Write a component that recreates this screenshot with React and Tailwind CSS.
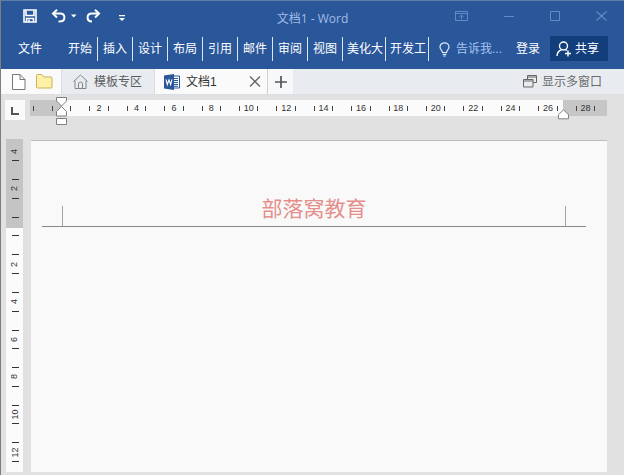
import React from "react";

const tabs = ["开始", "插入", "设计", "布局", "引用", "邮件", "审阅", "视图"];
const wideTabs = ["美化大", "开发工"];
const horizontalMarks = ["", 2, 4, 6, 8, 10, 12, 14, 16, 18, 20, 22, 24, 26, 28];
const verticalMarks = [2, "", 2, 4, 6, 8, 10, 12];

function TitleBar() {
  return (
    <header className="relative flex h-[30px] items-center text-white">
      <div className="flex items-center pl-[22px]">
        <button aria-label="保存" className="mr-[14px]">
          <svg width="14" height="14" viewBox="0 0 14 14" fill="none" stroke="currentColor" strokeWidth="1.6">
            <path d="M1 1h12v12H1z" />
            <path d="M3 1.500v5h8v-5" />
            <path d="M3.500 13V9.500h7V13" />
            <path d="M6 10.500v2.500" />
          </svg>
        </button>
        <button aria-label="撤销">
          <svg width="16" height="14" viewBox="0 0 16 14" fill="none" stroke="currentColor" strokeWidth="2">
            <path d="M6 0.8L2 4.6l4 3.8" />
            <path d="M2.4 4.6H9c3 0 4.4 1.5 4.4 3.8S11.500 12.600 7.500 12.600" />
          </svg>
        </button>
        <svg className="ml-[4px]" width="6" height="4" viewBox="0 0 6 4" fill="currentColor">
          <path d="M0 0.5h5.500L2.700 3.500z" />
        </svg>
        <button aria-label="恢复" className="ml-[8px]">
          <svg width="16" height="14" viewBox="0 0 16 14" fill="none" stroke="currentColor" strokeWidth="2">
            <path d="M10 0.8l4 3.800-4 3.800" />
            <path d="M13.600 4.600H7c-3 0-4.400 1.500-4.400 3.800S4 12.400 7 12.400" />
          </svg>
        </button>
        <button aria-label="自定义快速访问工具栏" className="mt-[4px] ml-[18px]">
          <svg width="6" height="7" viewBox="0 0 6 7" fill="currentColor">
            <path d="M0 0h6v1.200H0zM0 3h6L3 6z" />
          </svg>
        </button>
      </div>
      <h1 className="absolute inset-x-0 top-[10px] text-center font-['Open_Sans','Noto_Sans_CJK_SC',sans-serif] text-[12px] leading-4 text-[#a3bbe6]">
        文档1 - Word
      </h1>
      <div className="ml-auto flex items-center gap-[36px] pr-[17px] text-[#6389c6]">
        <button aria-label="功能区显示选项">
          <svg width="13" height="10" viewBox="0 0 13 10" fill="none" stroke="currentColor">
            <path d="M0.500 0.500h12v9H.5zM.5 2.500h12M6.500 8.500V4M4.500 6l2-2 2 2" />
          </svg>
        </button>
        <button aria-label="最小化">
          <svg width="10" height="10" viewBox="0 0 10 10" stroke="currentColor">
            <path d="M0 5.500h10" />
          </svg>
        </button>
        <button aria-label="最大化">
          <svg width="10" height="10" viewBox="0 0 10 10" fill="none" stroke="currentColor">
            <path d="M.5.5h9v9h-9z" />
          </svg>
        </button>
        <button aria-label="关闭">
          <svg width="11" height="10" viewBox="0 0 11 10" fill="none" stroke="currentColor" strokeWidth="1.200">
            <path d="M.5.500l10 9M10.500.500l-10 9" />
          </svg>
        </button>
      </div>
    </header>
  );
}

function Ribbon() {
  return (
    <nav className="flex h-[38px] items-start pt-[6px] text-[12px] whitespace-nowrap text-white">
      <button className="h-6 pr-[21px] pl-[17px]">文件</button>
      {tabs.map((tab) => (
        <button key={tab} className="h-6 w-[35px] border-r border-[#dce6f5] text-center">
          {tab}
        </button>
      ))}
      {wideTabs.map((tab) => (
        <button key={tab} className="h-6 w-[43px] border-r border-[#dce6f5] pl-1 text-left">
          {tab}
        </button>
      ))}
      <button className="ml-[10px] flex h-6 items-center gap-[6px] text-[#a9c4f0]">
        <svg width="11" height="15" viewBox="0 0 11 15" fill="none" stroke="#dce8fb" strokeWidth="1.200">
          <path d="M3.500 10.500C3.500 8.500 1 7.500 1 5a4.500 4.200 0 0 1 9 0c0 2.500-2.500 3.500-2.500 5.500zM3.700 12.300h3.600M4.200 14h2.600" />
        </svg>
        告诉我...
      </button>
      <div className="-mt-px ml-auto flex items-center pr-[16px]">
        <button className="h-6 pr-[10px]">登录</button>
        <button className="flex h-[25px] w-[58px] items-center gap-[3px] bg-[#123f7b] pl-[6px]">
          <svg width="16" height="16" viewBox="0 0 16 16" fill="none" stroke="currentColor" strokeWidth="1.400">
            <circle cx="7.500" cy="5" r="4" />
            <path d="M1 15c.3-3.500 2-5.500 4.500-6M9.500 8.700l1.500.8M12 9.500v6M9 12.500h6" />
          </svg>
          共享
        </button>
      </div>
    </nav>
  );
}

function DocumentTabs() {
  return (
    <div className="flex h-[26px] items-stretch border-b border-[#dcdfe2] bg-[#e8ecf1] text-[12px] text-[#5c5c5c]">
      <div className="flex w-[60px] items-center gap-[10px] bg-[#fafafa] pl-[11px]">
        <button aria-label="新建">
          <svg width="14" height="16" viewBox="0 0 14 16" fill="#fff" stroke="#777">
            <path d="M.5.500H8L13 5.500V15.500H.5zM8 .5V5.500H13" />
          </svg>
        </button>
        <button aria-label="打开">
          <svg width="17" height="15" viewBox="0 0 17 15" fill="#fdf0a8" stroke="#cdb159">
            <path d="M.5 1.500Q.5.500 1.500.5H6L8 3H15Q16 3 16 4V13Q16 14 15 14H1.500Q.5 14 .5 13z" />
          </svg>
        </button>
      </div>
      <button className="flex w-[94px] items-center gap-[6px] border-x border-[#d8dde3] pl-[11px]">
        <svg width="15" height="15" viewBox="0 0 15 15" fill="none" stroke="#858585">
          <path d="M.5 7.500L7.500 1l7 6.500M2 6.500v8h11v-8M5.500 14.500v-4.500a2 2 0 0 1 4 0v4.500" />
        </svg>
        模板专区
      </button>
      <div className="flex w-[113px] items-center border-r border-[#cfcfcf] bg-[#fafafa] pl-[9px] text-[#333]">
        <svg width="16" height="16" viewBox="0 0 16 16">
          <path d="M8 2h7.500v12H8z" fill="#fff" stroke="#2a579a" />
          <path d="M9.500 4.500h4.500M9.500 6.500h4.500M9.500 8.500h4.500M9.500 10.500h4.500M9.500 12.300h4.500" stroke="#2a579a" />
          <path d="M0 1.500L10 0v16L0 14.500z" fill="#2a579a" />
          <path d="M2 5.300l1.300 5.200L5 5.800l1.600 4.700L8 5.300" fill="none" stroke="#fff" strokeWidth="1.100" />
        </svg>
        <span className="ml-[6px]">文档1</span>
        <button aria-label="关闭文档" className="mr-[6px] ml-auto">
          <svg width="12" height="11" viewBox="0 0 12 11" stroke="#666" strokeWidth="1.300">
            <path d="M1 .5l10 10M11 .5L1 10.500" />
          </svg>
        </button>
      </div>
      <button aria-label="新建标签" className="flex w-[25px] items-center justify-center bg-[#f6f8fa]">
        <svg width="12" height="12" viewBox="0 0 12 12" stroke="#555" strokeWidth="1.700">
          <path d="M6 0v12M0 6h12" />
        </svg>
      </button>
      <button className="ml-auto flex items-center gap-[5px] pr-[22px] text-[#6b6b6b]">
        <svg width="14" height="13" viewBox="0 0 14 13" fill="none" stroke="#666">
          <path d="M4.500 4V.5h9v7H10M4.500 2h9M.5 4.500h9.500v7.500H.5zM.5 6h9.500" />
        </svg>
        显示多窗口
      </button>
    </div>
  );
}

function HorizontalRuler() {
  return (
    <div className="flex h-[45px] items-start pt-[5px]">
      <button aria-label="制表符" className="ml-[4px] flex h-5 w-5 items-center justify-center bg-[#fafafa] pt-[2px]">
        <svg width="8" height="8" viewBox="0 0 8 8" fill="none" stroke="#555" strokeWidth="2">
          <path d="M1 0v7h7" />
        </svg>
      </button>
      <div className="relative mr-[17px] ml-[5px] flex h-4 flex-1 items-center bg-[linear-gradient(to_right,#c6c6c6_32px,#fbfbfb_32px,#fbfbfb_calc(100%-44px),#c6c6c6_calc(100%-44px))] pr-[3px] text-[9px] leading-none text-[#333]">
        <div className="w-[13px] pl-[3px]">
          <div className="h-[5px] w-px bg-[#444]" />
        </div>
        {horizontalMarks.map((mark, i) => (
          <div key={i} className="flex flex-1 items-center justify-between px-[9px]">
            <span className="h-[5px] w-px bg-[#444]" />
            <span>{mark}</span>
            <span className="h-[5px] w-px bg-[#444]" />
          </div>
        ))}
        <svg className="absolute top-[-3px] left-[26px]" width="11" height="28" viewBox="0 0 11 28" fill="#fff" stroke="#808080">
          <path d="M.5.500h10v3.500l-5 5-5-5zM5.500 9.500l5 5v4.500H.5v-4.500zM.5 21.500h10v6H.5z" />
        </svg>
        <svg className="absolute top-[9px] right-[38px]" width="11" height="11" viewBox="0 0 11 11" fill="#fff" stroke="#808080">
          <path d="M5.500.800l5 5v4H.5v-4z" />
        </svg>
      </div>
    </div>
  );
}

function VerticalRuler() {
  return (
    <div className="flex w-[17px] flex-col bg-[linear-gradient(to_bottom,#c4c4c4_89px,#fbfbfb_89px)] pb-px pl-px text-[9px] leading-none text-[#333]">
      <div className="flex h-[31px] flex-col items-center gap-[4px] pt-[8px]">
        <span className="-rotate-90">4</span>
        <span className="h-px w-[7px] bg-[#333]" />
      </div>
      {verticalMarks.map((mark, i) => (
        <div key={i} className="flex flex-1 flex-col items-center justify-between py-[9px]">
          <span className="h-px w-[7px] bg-[#333]" />
          <span className="-rotate-90">{mark}</span>
          <span className="h-px w-[7px] bg-[#333]" />
        </div>
      ))}
    </div>
  );
}

export default function App() {
  return (
    <div className="flex min-h-screen flex-col border-l border-[#7d7d7d] bg-[#e1e1e1] font-['Liberation_Sans','Noto_Sans_CJK_SC',sans-serif]">
      <div className="border-t border-[#5f7ba8] bg-[#2a579a]">
        <TitleBar />
        <Ribbon />
      </div>
      <DocumentTabs />
      <HorizontalRuler />
      <main className="-mt-px flex flex-1 pr-[17px] pb-[3px] pl-[5px]">
        <VerticalRuler />
        <article className="mt-px ml-[8px] flex-1 border-t border-[#bdbdbd] bg-[#f9f9f9] px-[11px] pt-[55px]">
          <div className="mr-[10px] border-b border-[#888] px-[20px]">
            <div className="mt-[10px] flex h-5 items-end justify-center border-x border-[#a5a5a5]">
              <p className="pb-[3px] text-[21px] leading-7 text-[#e58f8c]">部落窝教育</p>
            </div>
          </div>
        </article>
      </main>
    </div>
  );
}
